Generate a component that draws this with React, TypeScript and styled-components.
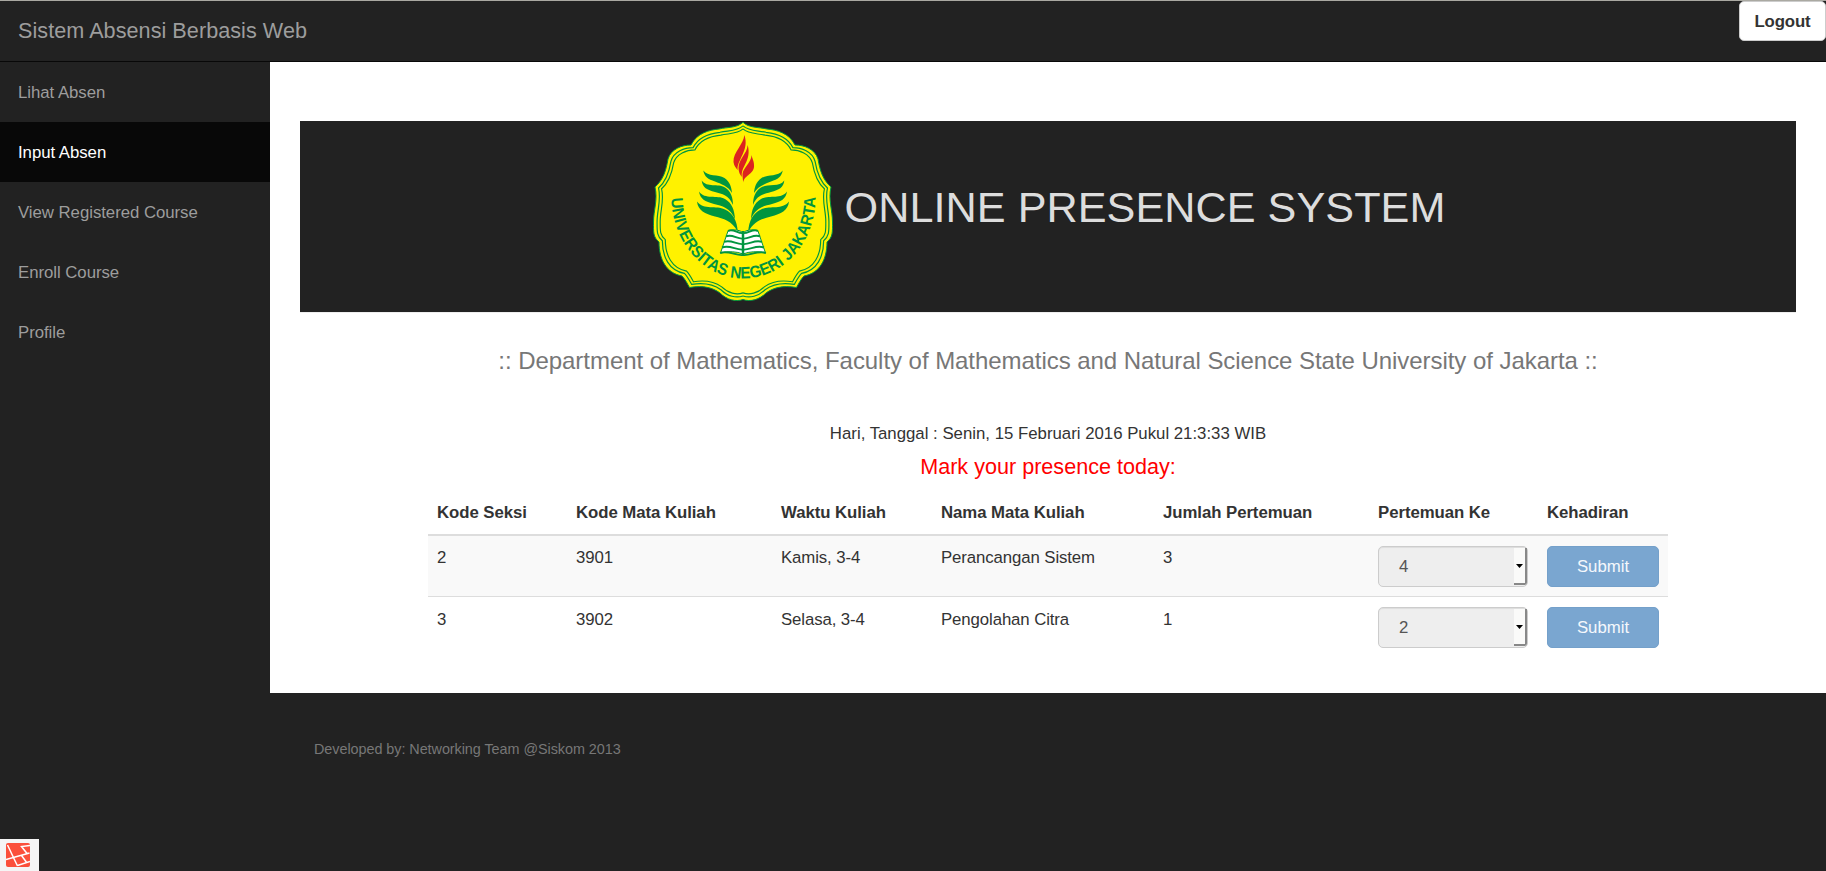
import React from "react";
import styled, { createGlobalStyle } from "styled-components";

const Global = createGlobalStyle`
  *, *::before, *::after { box-sizing: border-box; }
  body {
    margin: 0;
    background: #222;
    color: #333;
    font: 16.8px/24px "Liberation Sans", Arial, sans-serif;
  }
`;

const Page = styled.div`
  height: 871px;
  overflow: hidden;
  position: relative;
`;

const Navbar = styled.header`
  height: 62px;
  display: flex;
  justify-content: space-between;
  align-items: flex-start;
  border-top: 1px solid #aaa9a2;
  border-bottom: 1px solid #080808;
  background: #222;
`;

const Brand = styled.div`
  padding: 18px;
  font-size: 21.6px;
  line-height: 24px;
  letter-spacing: 0.05px;
  color: #9d9d9d;
`;

const LogoutButton = styled.button`
  width: 87px;
  height: 40px;
  padding: 1px 0 0;
  border: 1px solid #ccc;
  border-radius: 5px;
  background: #fff;
  color: #333;
  font: bold 16.8px/24px "Liberation Sans", Arial, sans-serif;
  letter-spacing: -0.15px;
`;

const Body = styled.div`
  display: grid;
  grid-template-columns: 270px 1fr;
`;

const SideNav = styled.nav`
  display: flex;
  flex-direction: column;
`;

const SideLink = styled.a<{ $active?: boolean }>`
  height: 60px;
  padding: 19px 18px 17px;
  letter-spacing: -0.04px;
  color: ${(p) => (p.$active ? "#fff" : "#9d9d9d")};
  background: ${(p) => (p.$active ? "#080808" : "#222")};
`;

const Main = styled.main`
  height: 631px;
  padding: 59px 30px 0;
  background: #fff;
  display: flex;
  flex-direction: column;
  align-items: center;
`;

const Banner = styled.div`
  width: 100%;
  height: 191px;
  padding: 1px 0 0 2px;
  display: flex;
  justify-content: center;
  align-items: flex-start;
  gap: 12px;
  background: #222;
  box-shadow: 0 1px 0 #eee;
`;

const BannerTitle = styled.h1`
  margin: 61px 0 0;
  font-size: 43.2px;
  line-height: 48px;
  font-weight: 400;
  letter-spacing: 0.04px;
  color: #ddd;
`;

const Department = styled.h2`
  margin: 36px 0 0;
  font-size: 24px;
  line-height: 26px;
  font-weight: 400;
  letter-spacing: -0.05px;
  color: #777;
`;

const DateLine = styled.p`
  margin: 48px 0 0;
`;

const Prompt = styled.p`
  margin: 8px 0 0;
  font-size: 21.6px;
  line-height: 26px;
  color: #f00;
`;

const Table = styled.table`
  width: 1240px;
  margin-top: 11px;
  table-layout: fixed;
  border-collapse: separate;
  border-spacing: 0;
`;

const Th = styled.th`
  height: 45px;
  padding: 0 9px;
  border-bottom: 2px solid #ddd;
  text-align: left;
  vertical-align: middle;
  font-weight: bold;
  letter-spacing: -0.06px;
`;

const Td = styled.td`
  padding: 10px 9px 9px;
  vertical-align: top;
  letter-spacing: -0.1px;
`;

const TextTd = styled(Td)``;

const Row = styled.tr<{ $striped?: boolean }>`
  background: ${(p) => (p.$striped ? "#f9f9f9" : "#fff")};

  tr + & td {
    border-top: 1px solid #ddd;
  }

  tr + & ${TextTd} {
    padding-top: 11px;
  }
`;

const Select = styled.div`
  width: 150px;
  height: 41px;
  display: flex;
  justify-content: space-between;
  padding: 1px 0 1px 20px;
  border: 1px solid #ccc;
  border-radius: 5px;
  background: #eee;
  box-shadow: inset 0 1px 1px rgba(0, 0, 0, 0.075);
  color: #555;
  line-height: 38px;
`;

const SelectArrow = styled.span`
  width: 13px;
  display: flex;
  align-items: center;
  justify-content: center;
  border-right: 2px solid #888;
  border-bottom: 2px solid #888;
  border-radius: 0 0 3px 0;
  background: #fafaf9;
`;

const SubmitButton = styled.button`
  display: block;
  width: 112px;
  height: 41px;
  padding: 0;
  border: 1px solid #74a0ca;
  border-radius: 5px;
  background: #7aa6d0;
  color: #f5f8fc;
  font: 16.8px/24px "Liberation Sans", Arial, sans-serif;
`;

const Footer = styled.footer`
  padding: 45px 0 0 314px;
  font-size: 14.4px;
  line-height: 22px;
  letter-spacing: -0.05px;
  color: #777;
`;

const DebugBadge = styled.div`
  position: absolute;
  left: 0;
  bottom: 0;
  width: 39px;
  height: 32px;
  padding: 4px 0 0 6px;
  background: #f5f5f5;
`;

const EmblemDrawing = styled.svg`
  flex: none;
`;

const OUTLINE_HALF =
  "M90 .3 C84 6 75 5 66 7 C56 8 44 11 38 23 C29 23 18 27 15 37 C13 49 10 58 2 65 C5 78 .5 88 .5 100 C.5 110 0 115 6 120 C6 137 13 151 29 154 C32 157 34 161 36.500 165.500 C51 163 60 166 67 171 C74 178 83 180 90 177.500";

const WING = [
  "M50.300 48.500 C55 55 65 52 71.500 56 C77 60 78.500 65 79 71 C75 64 68 62 62 59.500 C55 57 51.500 55 50.300 48.500Z",
  "M48.700 58.500 C54 66 65 61 72 65.500 C78 69 80 76 80 83 C76 73 69 72 62 70 C54 68 49.500 65.500 48.700 58.500Z",
  "M46 69.500 C52 78 64 72.500 72 77 C79 81 81.500 88 82 97 C77 85.500 69 84 61 82 C52 79.500 47 77 46 69.500Z",
  "M44 79.500 C51 88.500 63 83 72 87.500 C80 91.500 84 98 84.800 110 C79 98.500 70 96.500 62 94.500 C52 92 45 88.500 44 79.500Z",
];

const BOOK_LINES = [0, 5.5, 11, 16.5, 22];

function Emblem() {
  const halves = ["", "translate(180 0) scale(-1 1)"];
  return (
    <EmblemDrawing width="180" height="180" viewBox="0 0 180 180">
      {halves.map((t) => (
        <g key={t} transform={t}>
          <path d={OUTLINE_HALF} fill="#fff200" stroke="#00953f" strokeWidth="1" />
        </g>
      ))}
      <rect x="88" y="2.500" width="4" height="174" fill="#fff200" />
      {halves.map((t) => (
        <g key={t} transform={t} fill="none" stroke="#00953f">
          <path d={OUTLINE_HALF} strokeWidth="1.250" transform="translate(3.600 3.560) scale(.96)" />
          <path d={OUTLINE_HALF} strokeWidth="1.250" transform="translate(6.750 6.675) scale(.925)" />
        </g>
      ))}
      <g fill="#dc241f">
        <path d="M91.300 13 C91 22 80 30 80.500 40 C81 44 83 46 84.700 48 C83 39 97 28 91.300 13Z" />
        <path d="M94.700 23 C94 32 85.500 37 85.500 46 C85.500 50 87 53 89 55 C87 45 99 39 94.700 23Z" />
        <path d="M98.700 33 C98 41 90 46 89.500 52 C89.500 56 90 58 90.300 60.500 C91 53 102 52 101 43 C101 38 99 37 98.700 33Z" />
      </g>
      {halves.map((t) => (
        <g key={t} transform={t} fill="#00953f">
          {WING.map((d) => (
            <path key={d} d={d} />
          ))}
          <path d="M75 109 Q85 106 90 111 V132 Q80 128 67.500 131Z" fill="#fff" stroke="#00953f" strokeWidth="1" />
          {BOOK_LINES.map((y) => (
            <path
              key={y}
              d={`M${75 - y * 0.36} ${109 + y} C${80 - y * 0.2} ${106 + y} ${85 - y * 0.1} ${112 + y} 90 ${111 + y}`}
              fill="none"
              stroke="#00953f"
              strokeWidth="1.900"
            />
          ))}
        </g>
      ))}
      <path d="M90 109 V133" stroke="#00953f" strokeWidth="2.500" />
      <path id="emblem-arc" d="M18.500 76 A72 81 0 0 0 162.500 75" fill="none" />
      <text fill="#00953f" fontFamily="Liberation Sans, Arial, sans-serif" fontWeight="bold" fontSize="16.500">
        <textPath href="#emblem-arc" textLength="240" lengthAdjust="spacingAndGlyphs">
          UNIVERSITAS NEGERI JAKARTA
        </textPath>
      </text>
    </EmblemDrawing>
  );
}

function DebugIcon() {
  return (
    <svg width="24" height="24" viewBox="0 0 24 24">
      <rect width="24" height="24" rx="2" fill="#fb503b" />
      <path
        d="M1.500 2 L11.500 23 M0 16.500 L23.500 10 M24 2.500 L15.500 3.500 L21 10.500 M15.500 12.500 L21 20 M11.500 22.500 L24 18.500"
        fill="none"
        stroke="#fff"
        strokeWidth="1.500"
      />
    </svg>
  );
}

const LINKS = ["Lihat Absen", "Input Absen", "View Registered Course", "Enroll Course", "Profile"];

const COLUMNS: [string, number][] = [
  ["Kode Seksi", 139],
  ["Kode Mata Kuliah", 205],
  ["Waktu Kuliah", 160],
  ["Nama Mata Kuliah", 222],
  ["Jumlah Pertemuan", 215],
  ["Pertemuan Ke", 169],
  ["Kehadiran", 130],
];

const ROWS = [
  { cells: ["2", "3901", "Kamis, 3-4", "Perancangan Sistem", "3"], next: "4" },
  { cells: ["3", "3902", "Selasa, 3-4", "Pengolahan Citra", "1"], next: "2" },
];

export default function App() {
  return (
    <Page>
      <Global />
      <Navbar>
        <Brand>Sistem Absensi Berbasis Web</Brand>
        <LogoutButton>Logout</LogoutButton>
      </Navbar>
      <Body>
        <SideNav>
          {LINKS.map((label) => (
            <SideLink key={label} $active={label === "Input Absen"}>
              {label}
            </SideLink>
          ))}
        </SideNav>
        <Main>
          <Banner>
            <Emblem />
            <BannerTitle>ONLINE PRESENCE SYSTEM</BannerTitle>
          </Banner>
          <Department>
            :: Department of Mathematics, Faculty of Mathematics and Natural Science State University of Jakarta ::
          </Department>
          <DateLine>Hari, Tanggal : Senin, 15 Februari 2016 Pukul 21:3:33 WIB</DateLine>
          <Prompt>Mark your presence today:</Prompt>
          <Table>
            <colgroup>
              {COLUMNS.map(([name, width]) => (
                <col key={name} width={width} />
              ))}
            </colgroup>
            <thead>
              <tr>
                {COLUMNS.map(([name]) => (
                  <Th key={name}>{name}</Th>
                ))}
              </tr>
            </thead>
            <tbody>
              {ROWS.map((row, i) => (
                <Row key={row.next} $striped={i % 2 === 0}>
                  {row.cells.map((cell, j) => (
                    <TextTd key={j}>{cell}</TextTd>
                  ))}
                  <Td>
                    <Select>
                      {row.next}
                      <SelectArrow>
                        <svg width="7" height="4" viewBox="0 0 7 4">
                          <path d="M0 0H7L3.5 4Z" fill="#000" />
                        </svg>
                      </SelectArrow>
                    </Select>
                  </Td>
                  <Td>
                    <SubmitButton>Submit</SubmitButton>
                  </Td>
                </Row>
              ))}
            </tbody>
          </Table>
        </Main>
      </Body>
      <Footer>Developed by: Networking Team @Siskom 2013</Footer>
      <DebugBadge>
        <DebugIcon />
      </DebugBadge>
    </Page>
  );
}
